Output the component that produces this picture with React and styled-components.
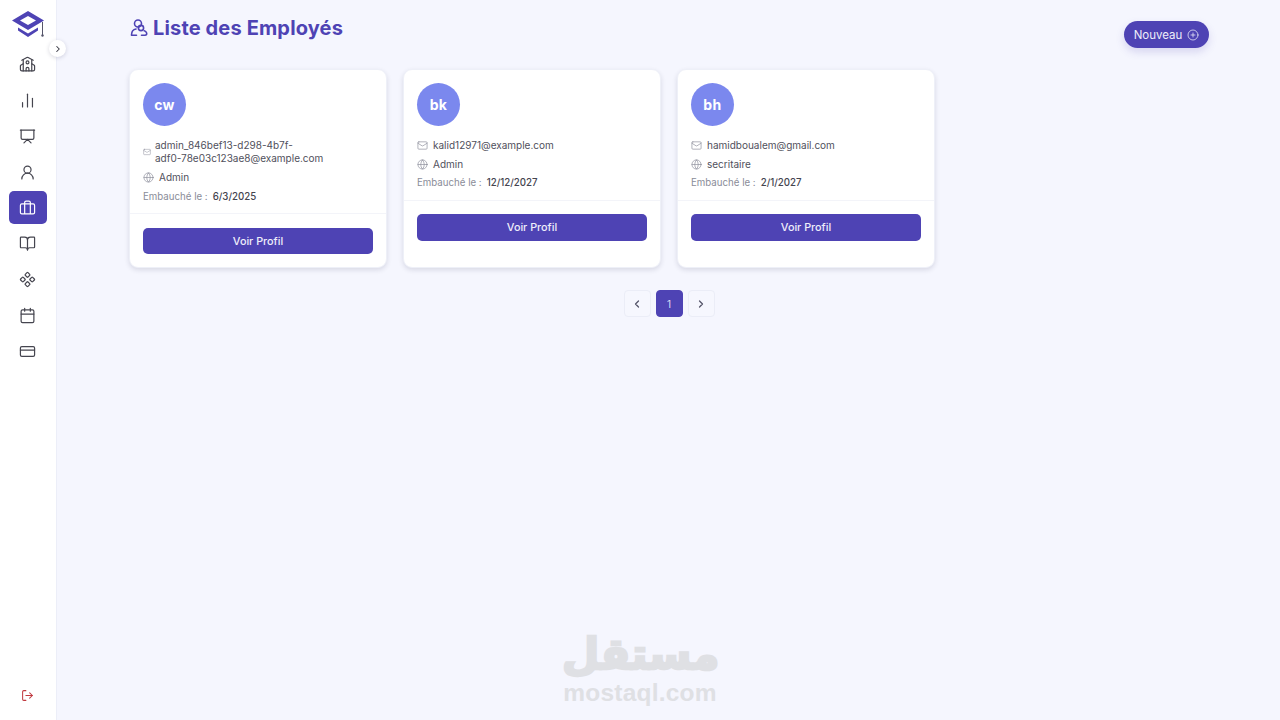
import React from 'react';
import styled, { createGlobalStyle } from 'styled-components';
import {
  School, ChartNoAxesColumn, Presentation, UserRound, BookOpen,
  Component, Calendar, CreditCard, LogOut, Mail, Globe, CirclePlus, ChevronLeft, ChevronRight,
} from 'lucide-react';

const Global = createGlobalStyle`
  html, body { margin: 0; height: 100%; }
  body {
    background: #f5f6fe;
    font-family: "Inter", "Liberation Sans", sans-serif;
    color: #4b4b5a;
  }
  * { box-sizing: border-box; }
`;

const Shell = styled.div`
  display: flex;
  height: 720px;
  overflow: hidden;
`;

const Sidebar = styled.aside`
  position: relative;
  width: 57px;
  flex-shrink: 0;
  background: #fff;
  border-right: 1px solid #eceef8;
  display: flex;
  flex-direction: column;
  align-items: center;
  padding: 10px 1px 0 0;
`;

const Logo = styled.svg`
  width: 34px;
  height: 28px;
  margin-bottom: 8px;
`;

const Toggle = styled.button`
  position: absolute;
  top: 40px;
  right: -10px;
  width: 17px;
  height: 17px;
  border: 0;
  padding: 0;
  border-radius: 50%;
  background: #fff;
  color: #33333f;
  box-shadow: 0 1px 4px rgba(40, 40, 80, 0.18);
  display: flex;
  align-items: center;
  justify-content: center;
`;

const NavItem = styled.div`
  width: 38px;
  height: ${p => (p.$active ? '33px' : '36px')};
  margin: ${p => (p.$active ? '1px 0' : '0')};
  border-radius: 5px;
  display: flex;
  align-items: center;
  justify-content: center;
  background: ${p => (p.$active ? '#4e43b4' : 'transparent')};
  color: ${p => (p.$active ? '#fff' : '#45454f')};
`;

const LogoutItem = styled.div`
  margin-top: auto;
  margin-bottom: 18px;
  display: flex;
  color: #c0393f;
`;

const Main = styled.main`
  flex: 1;
  padding: 14px 71px 0 72px;
`;

const Header = styled.header`
  display: flex;
  justify-content: space-between;
  align-items: flex-start;
  height: 55px;
`;

const Title = styled.h1`
  margin: 0;
  display: flex;
  align-items: center;
  gap: 4px;
  font-size: 20px;
  line-height: 28px;
  font-weight: 700;
  color: #4e43b4;
  letter-spacing: 0.15px;
`;

const TitleIcon = styled.svg`
  width: 20px;
  height: 20px;
  flex-shrink: 0;
`;

const NewButton = styled.button`
  margin-top: 7px;
  width: 85px;
  height: 27px;
  border: 0;
  border-radius: 14px;
  background: #4e43b4;
  color: #eeeefa;
  font: 400 11.5px "Inter", "Liberation Sans", sans-serif;
  display: flex;
  align-items: center;
  justify-content: center;
  gap: 5px;
  box-shadow: 0 4px 8px rgba(78, 67, 180, 0.18);
`;

const Grid = styled.div`
  display: grid;
  grid-template-columns: repeat(4, 1fr);
  gap: 16px;
`;

const Card = styled.article`
  height: 199px;
  background: #fff;
  border: 1px solid #eef0f8;
  border-radius: 9px;
  box-shadow: 0 2px 5px rgba(40, 40, 80, 0.14);
  display: flex;
  flex-direction: column;
`;

const CardBody = styled.div`
  padding: 13px 13px 10px;
  border-bottom: 1px solid #f3f4f9;
`;

const Avatar = styled.div`
  width: 43px;
  height: 43px;
  border-radius: 50%;
  background: #7b88ee;
  color: #fff;
  font-size: 14px;
  font-weight: 700;
  letter-spacing: 0.4px;
  display: flex;
  align-items: center;
  justify-content: center;
  margin-bottom: 13px;
`;

const InfoRow = styled.div`
  display: flex;
  align-items: center;
  gap: ${p => (p.$tight ? '4px' : '5px')};
  margin-bottom: 5.3px;
  font-size: 10px;
  line-height: 13.4px;
  color: #50505c;
  svg { flex-shrink: 0; color: #8d8f9c; }
`;

const InfoText = styled.span`
  white-space: pre-line;
`;

const HireRow = styled.div`
  display: flex;
  gap: 5px;
  font-size: 9.7px;
  line-height: 13.4px;
  color: #8a8c98;
`;

const HireDate = styled.span`
  color: #44444f;
  font-weight: 500;
`;

const CardFooter = styled.div`
  padding: 13.5px 13px;
`;

const ProfileButton = styled.button`
  width: 100%;
  height: 26.7px;
  border: 0;
  border-radius: 5px;
  background: #4e43b4;
  color: #eeeefa;
  font: 500 10.8px "Inter", "Liberation Sans", sans-serif;
`;

const Pagination = styled.nav`
  display: flex;
  justify-content: center;
  gap: 5px;
  margin-top: 22px;
`;

const PageButton = styled.button`
  width: 27px;
  height: 27px;
  padding: 0;
  border-radius: 4px;
  border: 1px solid ${p => (p.$active ? '#4e43b4' : '#ebedf7')};
  background: ${p => (p.$active ? '#4e43b4' : '#f6f7fe')};
  color: ${p => (p.$active ? '#dcdcf4' : '#55556a')};
  font: 400 10px "Inter", "Liberation Sans", sans-serif;
  display: flex;
  align-items: center;
  justify-content: center;
`;

const Watermark = styled.div`
  position: absolute;
  left: 562px;
  top: 628px;
  width: 156px;
  text-align: center;
  color: #dfe0e4;
  pointer-events: none;
`;

const WatermarkArabic = styled.div`
  font: 700 43px/52px "DejaVu Sans", sans-serif;
  -webkit-text-stroke: 2.5px #dfe0e4;
`;

const WatermarkLatin = styled.div`
  font: 700 24.5px/26px "Liberation Sans", sans-serif;
  letter-spacing: 0.2px;
`;

// plain case with two straps, lucide only has the one with a clasp
const Suitcase = ({ size, strokeWidth }) => (
  <svg width={size} height={size} viewBox="0 0 24 24" fill="none" stroke="currentColor" strokeWidth={strokeWidth} strokeLinejoin="round">
    <rect x="2" y="7" width="20" height="14" rx="2" />
    <path d="M8 21V7M16 21V7M8 7V5a2 2 0 0 1 2-2h4a2 2 0 0 1 2 2v2" />
  </svg>
);

const navIcons = [School, ChartNoAxesColumn, Presentation, UserRound, Suitcase, BookOpen, Component, Calendar, CreditCard];

const employees = [
  { initials: 'cw', email: 'admin_846bef13-d298-4b7f-\nadf0-78e03c123ae8@example.com', role: 'Admin', hired: '6/3/2025', mailSize: 8 },
  { initials: 'bk', email: 'kalid12971@example.com', role: 'Admin', hired: '12/12/2027', mailSize: 11 },
  { initials: 'bh', email: 'hamidboualem@gmail.com', role: 'secritaire', hired: '2/1/2027', mailSize: 11 },
];

const EmployeeCard = ({ initials, email, role, hired, mailSize }) => (
  <Card>
    <CardBody>
      <Avatar>{initials}</Avatar>
      <InfoRow $tight={mailSize === 8}>
        <Mail size={mailSize} strokeWidth={1.5} />
        <InfoText>{email}</InfoText>
      </InfoRow>
      <InfoRow>
        <Globe size={11} strokeWidth={1.5} />
        <InfoText>{role}</InfoText>
      </InfoRow>
      <HireRow>
        Embauché le :
        <HireDate>{hired}</HireDate>
      </HireRow>
    </CardBody>
    <CardFooter>
      <ProfileButton>Voir Profil</ProfileButton>
    </CardFooter>
  </Card>
);

export default function App() {
  return (
    <Shell>
      <Global />
      <Sidebar>
        <Logo viewBox="0 0 34 28">
          <path d="M17 1 33 10.5 17 20 1 10.5Z M17 6 9 10.5 17 15 25 10.5Z" fill="#4e43b4" fillRule="evenodd" />
          <path d="M7 17.5 17 23.5 27 17.5 27 20.5 17 27 7 20.5Z" fill="#4e43b4" />
          <path d="M31.5 12v13" stroke="#55556a" strokeWidth="1" />
          <circle cx="31.5" cy="25.5" r="1.2" fill="#55556a" />
        </Logo>
        <Toggle><ChevronRight size={10} strokeWidth={2.5} /></Toggle>
        {navIcons.map((Icon, i) => (
          <NavItem key={i} $active={i === 4}>
            <Icon size={17} strokeWidth={1.7} />
          </NavItem>
        ))}
        <LogoutItem><LogOut size={13} strokeWidth={1.9} /></LogoutItem>
      </Sidebar>
      <Main>
        <Header>
          <Title>
            <TitleIcon viewBox="0 0 20 20" fill="none" stroke="#4e43b4" strokeWidth="1.6" strokeLinecap="round">
              <circle cx="9" cy="5.5" r="3.5" />
              <circle cx="12" cy="10" r="2.6" />
              <path d="M2.5 17c0-3 1.5-5.5 4.5-6M2.5 17.2h5M12.5 17.2h3.5c1.5 0 2-1 1.6-2.3-.4-1.2-1.3-1.9-2.4-2.2" />
            </TitleIcon>
            Liste des Employés
          </Title>
          <NewButton>Nouveau <CirclePlus size={12} strokeWidth={1.5} /></NewButton>
        </Header>
        <Grid>
          {employees.map(e => <EmployeeCard key={e.initials} {...e} />)}
        </Grid>
        <Pagination>
          <PageButton><ChevronLeft size={12} strokeWidth={2.5} /></PageButton>
          <PageButton $active>1</PageButton>
          <PageButton><ChevronRight size={12} strokeWidth={2.5} /></PageButton>
        </Pagination>
      </Main>
      <Watermark>
        <WatermarkArabic>مستقل</WatermarkArabic>
        <WatermarkLatin>mostaql.com</WatermarkLatin>
      </Watermark>
    </Shell>
  );
}
